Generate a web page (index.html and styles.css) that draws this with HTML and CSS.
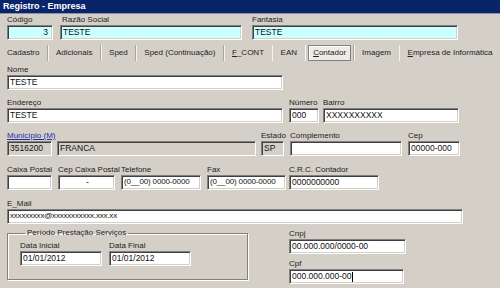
FILE: index.html
```html
<!DOCTYPE html>
<html>
<head>
<meta charset="utf-8">
<link rel="stylesheet" href="styles.css">
</head>
<body>
<div class="window">
  <div class="titlebar">Registro - Empresa</div>
  <div class="content">
    <div class="row row1">
      <div class="field w-cod"><div class="lbl">Código</div><div class="inp cyan right">3</div></div>
      <div class="field w-razao"><div class="lbl ind">Razão Social</div><div class="inp cyan">TESTE</div></div>
      <div class="field w-fant"><div class="lbl">Fantasia</div><div class="inp cyan">TESTE</div></div>
    </div>

    <div class="tabs">
      <span class="tab first">Cadastro</span><span class="sep"></span>
      <span class="tab">Adicionais</span><span class="sep"></span>
      <span class="tab">Sped</span><span class="sep"></span>
      <span class="tab">Sped (Continuação)</span><span class="sep"></span>
      <span class="tab"><u>F</u>_CONT</span><span class="sep"></span>
      <span class="tab">EAN</span><span class="sep"></span>
      <span class="tab active"><u>C</u>ontador</span><span class="sep"></span>
      <span class="tab">Imagem</span><span class="sep"></span>
      <span class="tab"><u>E</u>mpresa de Informática</span>
    </div>

    <div class="row row-nome">
      <div class="field w-nome"><div class="lbl">Nome</div><div class="inp">TESTE</div></div>
    </div>

    <div class="row row-end">
      <div class="field w-nome"><div class="lbl">Endereço</div><div class="inp">TESTE</div></div>
      <div class="field w-num"><div class="lbl">Número</div><div class="inp">000</div></div>
      <div class="field w-bairro"><div class="lbl">Bairro</div><div class="inp">XXXXXXXXXX</div></div>
    </div>

    <div class="row row-mun">
      <div class="field w-codmun"><div class="lbl link">Município (M)</div><div class="inp ro">3516200</div></div>
      <div class="field w-mun"><div class="lbl">&nbsp;</div><div class="inp ro">FRANCA</div></div>
      <div class="field w-uf"><div class="lbl">Estado</div><div class="inp ro">SP</div></div>
      <div class="field w-comp"><div class="lbl">Complemento</div><div class="inp"></div></div>
      <div class="field w-cep"><div class="lbl">Cep</div><div class="inp">00000-000</div></div>
    </div>

    <div class="row row-tel">
      <div class="field w-cx"><div class="lbl">Caixa Postal</div><div class="inp"></div></div>
      <div class="field w-cepcx"><div class="lbl">Cep Caixa Postal</div><div class="inp center">-</div></div>
      <div class="field w-tel"><div class="lbl">Telefone</div><div class="inp tight">(0__00) 0000-0000</div></div>
      <div class="field w-fax"><div class="lbl">Fax</div><div class="inp tight">(0__00) 0000-0000</div></div>
      <div class="field w-crc"><div class="lbl">C.R.C. Contador</div><div class="inp">0000000000</div></div>
    </div>

    <div class="row row-mail">
      <div class="field w-mail"><div class="lbl">E_Mail</div><div class="inp small">xxxxxxxxx@xxxxxxxxxxx.xxx.xx</div></div>
    </div>

    <div class="bottom">
      <fieldset class="group">
        <legend>Período Prestação Serviços</legend>
        <div class="row">
          <div class="field w-data"><div class="lbl">Data Inicial</div><div class="inp">01/01/2012</div></div>
          <div class="field w-data"><div class="lbl">Data Final</div><div class="inp">01/01/2012</div></div>
        </div>
      </fieldset>
      <div class="docs">
        <div class="field w-cnpj"><div class="lbl">Cnpj</div><div class="inp">00.000.000/0000-00</div></div>
        <div class="field w-cpf"><div class="lbl">Cpf</div><div class="inp">000.000.000-00<span class="caret"></span></div></div>
      </div>
    </div>
  </div>
</div>
</body>
</html>
```

FILE: styles.css
```css
html, body {
  margin: 0;
  padding: 0;
}
body {
  width: 500px;
  height: 288px;
  overflow: hidden;
  background: #d4d0c8;
  font-family: "Liberation Sans", Arial, sans-serif;
  font-size: 8px;
  color: #000;
}
.window {
  width: 500px;
  height: 288px;
  background: #d4d0c8;
}
.titlebar {
  height: 13px;
  background: #0a246a;
  color: #fff;
  font-weight: bold;
  font-size: 9px;
  line-height: 13px;
  padding-left: 3px;
  border-bottom: 1px solid #8a93ad;
}
.content {
  padding-left: 7px;
}
.row {
  display: flex;
  align-items: flex-end;
}
.field {
  display: flex;
  flex-direction: column;
}
.lbl {
  height: 10px;
  line-height: 10px;
  font-size: 8px;
  white-space: nowrap;
  color: #222;
}
.lbl.ind { padding-left: 2px; }
.lbl.link {
  color: #2a2aa8;
  text-decoration: underline;
}
.inp {
  box-sizing: border-box;
  height: 15px;
  line-height: 12px;
  padding-left: 2px;
  font-size: 8.5px;
  color: #111;
  background: #fff;
  border: 1px solid;
  border-color: #808080 #fff #fff #808080;
  box-shadow: inset 1px 1px 0 #404040, inset -1px -1px 0 #d4d0c8;
  white-space: nowrap;
  overflow: hidden;
}
.inp.cyan { background: #ccffff; }
.inp.ro { background: #d4d0c8; }
.inp.right { text-align: right; padding-right: 4px; }
.inp.center { text-align: center; }
.inp.tight { font-size: 8px; letter-spacing: -0.15px; }
.inp.small { font-size: 8px; letter-spacing: -0.2px; }
.caret {
  display: inline-block;
  width: 1px;
  height: 10px;
  background: #000;
  vertical-align: middle;
}

/* row 1 */
.row1 { margin-top: 1px; }
.w-cod { width: 46px; margin-right: 7px; }
.w-razao { width: 182px; margin-right: 10px; }
.w-fant { width: 206px; }

/* tabs */
.tabs {
  display: flex;
  align-items: center;
  height: 20px;
  margin-top: 3px;
  font-size: 8px;
  color: #222;
}
.tab {
  padding: 0 7.5px;
  white-space: nowrap;
  line-height: 14px;
}
.tab.first { padding-left: 0; }
.tab.active {
  margin: 0 2px;
  padding: 0 4px;
  height: 14px;
  background: #ecebe6;
  border: 1px solid #808080;
  box-shadow: inset 1px 1px 0 #fff;
}
.sep {
  width: 1px;
  height: 16px;
  background: #a8a59e;
  border-right: 1px solid #f4f3ef;
}

/* nome */
.row-nome { margin-top: 2px; }
.w-nome { width: 276px; margin-right: 6px; }

/* endereco */
.row-end { margin-top: 8px; }
.w-num { width: 30px; margin-right: 4px; }
.w-bairro { width: 136px; }

/* municipio */
.row-mun { margin-top: 8px; }
.w-codmun { width: 45px; margin-right: 5px; }
.w-mun { width: 199px; margin-right: 5px; }
.w-uf { width: 23px; margin-right: 6px; }
.w-comp { width: 112px; margin-right: 6px; }
.w-cep { width: 52px; }

/* telefone */
.row-tel { margin-top: 9px; }
.w-cx { width: 45px; margin-right: 6px; }
.w-cepcx { width: 57px; margin-right: 6px; }
.w-tel { width: 80px; margin-right: 6px; }
.w-fax { width: 79px; margin-right: 3px; }
.w-crc { width: 90px; }

/* email */
.row-mail { margin-top: 9px; }
.w-mail { width: 456px; }

/* bottom */
.bottom {
  display: flex;
  align-items: flex-start;
  margin-top: 4px;
}
.group {
  box-sizing: border-box;
  width: 241px;
  height: 52px;
  margin: 0 41px 0 0;
  padding: 3px 0 0 12px;
  border: 1px solid #808080;
  box-shadow: 1px 1px 0 #fff, inset 1px 1px 0 #fff;
  min-width: 0;
}
.group legend {
  font-size: 8px;
  padding: 0 2px;
  margin-left: 5px;
  line-height: 10px;
  color: #222;
}
.w-data { width: 82px; margin-right: 7px; }
.docs {
  display: flex;
  flex-direction: column;
  padding-top: 1px;
}
.w-cnpj { width: 117px; }
.w-cpf { width: 115px; margin-top: 5px; }
```
